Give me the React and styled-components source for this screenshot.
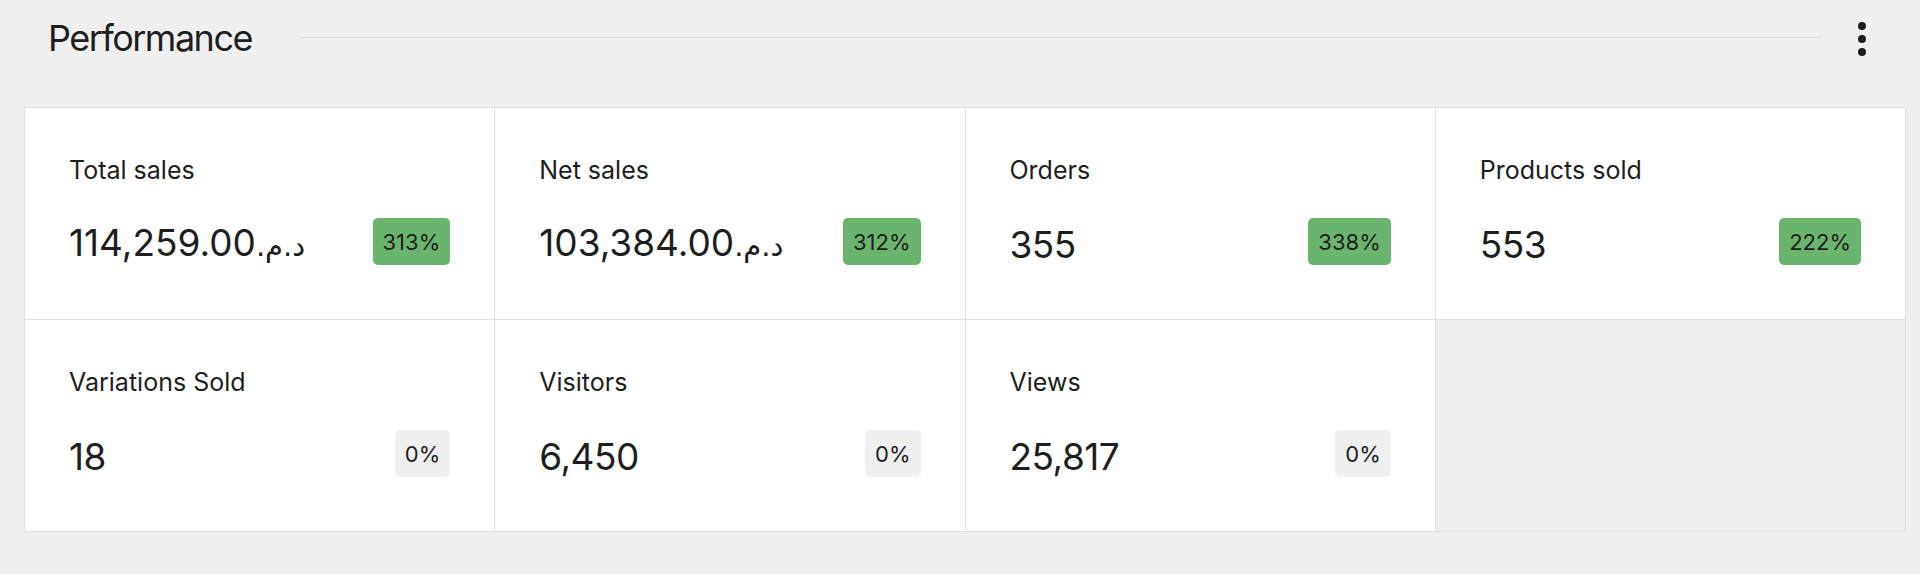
import styled, { createGlobalStyle } from "styled-components";

const GlobalStyle = createGlobalStyle`
  body {
    margin: 0;
    background: #f0f0f0;
    font-family: Inter, "DejaVu Sans", sans-serif;
    color: #1e1e1e;
  }
`;

const Page = styled.div`
  display: flex;
  flex-direction: column;
  padding: 17px 14px 0 24px;
`;

const Header = styled.div`
  display: flex;
  align-items: center;
  padding: 0 32px 0 24px;
`;

const Title = styled.h2`
  margin: 0;
  font-size: 36px;
  line-height: 43px;
  font-weight: 400;
  letter-spacing: -1.5px;
`;

const Rule = styled.div`
  flex: 1;
  height: 1px;
  background: #dcdcdc;
  margin: 0 28px 0 48px;
  align-self: center;
  transform: translateY(-1px);
`;

const MenuButton = styled.button`
  display: flex;
  align-items: center;
  justify-content: center;
  width: 24px;
  height: 43px;
  padding: 0;
  border: none;
  background: transparent;
  color: #1e1e1e;
  cursor: pointer;
`;

const Grid = styled.div`
  display: grid;
  grid-template-columns: repeat(4, 1fr);
  gap: 1px;
  margin-top: 47px;
  background: #e0e0e0;
  border: 1px solid #e0e0e0;
`;

const Cell = styled.div`
  display: flex;
  flex-direction: column;
  gap: 32px;
  padding: 46px 44px 54px 44px;
  background: #fff;
`;

const EmptyCell = styled.div`
  background: #efefef;
`;

const Label = styled.div`
  font-size: 25px;
  line-height: 32px;
`;

const ValueRow = styled.div`
  display: flex;
  align-items: center;
  justify-content: space-between;
  height: 47px;
`;

const Value = styled.div`
  font-size: 37px;
  line-height: 44px;
  letter-spacing: -0.5px;
  margin-top: 6px;
  white-space: nowrap;
`;

const Currency = styled.span`
  direction: rtl;
  unicode-bidi: isolate;
  font-family: "DejaVu Sans", sans-serif;
  font-size: 29px;
  letter-spacing: -0.5px;
`;

const Delta = styled.span`
  display: inline-flex;
  align-items: center;
  height: 47px;
  padding: 0 10px;
  border-radius: 5px;
  font-size: 22px;
  background: ${(p) => (p.$up ? "#6ab56e" : "#f0f0f0")};
  color: #1e1e1e;
`;

const stats = [
  { label: "Total sales", value: "114,259.00", currency: true, delta: 313 },
  { label: "Net sales", value: "103,384.00", currency: true, delta: 312 },
  { label: "Orders", value: "355", delta: 338 },
  { label: "Products sold", value: "553", delta: 222 },
  { label: "Variations Sold", value: "18", delta: 0 },
  { label: "Visitors", value: "6,450", delta: 0 },
  { label: "Views", value: "25,817", delta: 0 },
];

const Dots = () => (
  <svg width="10" height="36" viewBox="0 0 10 36">
    <circle cx="5" cy="5" r="4" fill="currentColor" />
    <circle cx="5" cy="18" r="4" fill="currentColor" />
    <circle cx="5" cy="31" r="4" fill="currentColor" />
  </svg>
);

const App = () => {
  return (
    <Page>
      <GlobalStyle />
      <Header>
        <Title>Performance</Title>
        <Rule />
        <MenuButton aria-label="Choose which values to display">
          <Dots />
        </MenuButton>
      </Header>
      <Grid>
        {stats.map((s) => (
          <Cell key={s.label}>
            <Label>{s.label}</Label>
            <ValueRow>
              <Value>
                {s.value}
                {s.currency && <Currency>د.م.</Currency>}
              </Value>
              <Delta $up={s.delta > 0}>{s.delta}%</Delta>
            </ValueRow>
          </Cell>
        ))}
        <EmptyCell />
      </Grid>
    </Page>
  );
};

export default App;
